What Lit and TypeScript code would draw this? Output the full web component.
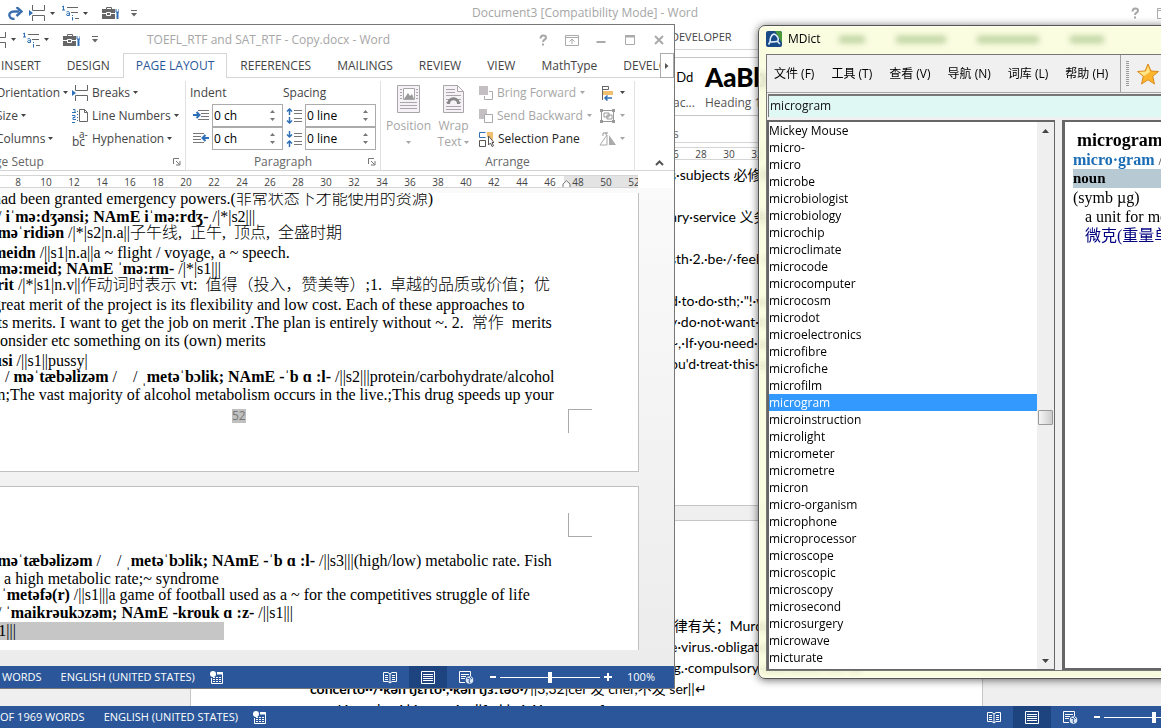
import { LitElement, html, css, svg } from "lit";
import { customElement, property } from "lit/decorators.js";
import { classMap } from "lit/directives/class-map.js";

const base = css`
  *, *::before, *::after { box-sizing: border-box; }
  :host {
    font-family: "Open Sans", "Noto Sans CJK SC", sans-serif;
    font-size: 12px;
    line-height: 16px;
    color: #444;
  }
  button {
    font: inherit;
    color: inherit;
    background: none;
    border: 0;
    padding: 0;
    margin: 0;
    display: flex;
    align-items: center;
    white-space: nowrap;
  }
  input { font: inherit; margin: 0; border-radius: 0; outline: 0; }
  svg { display: block; flex: none; }
  ul { list-style: none; margin: 0; padding: 0; }
  p { margin: 0; white-space: pre; }
`;

const icon = (w: number, h: number, body: unknown) =>
  html`<svg width=${w} height=${h} viewBox="0 0 ${w} ${h}" fill="none" aria-hidden="true">${body}</svg>`;

const caret = () => icon(5, 3, svg`<path d="M0 0h5L2.5 3z" fill="currentColor"/>`);

const breaksIcon = () => icon(17, 16, svg`
  <path d="M3.500 0v5.500H15.500V0M3.500 16V10.500H15.500V16" stroke="#666"/>
  <path d="M0 5v6l4-3z" fill="#2f6fb5"/>`);

const listIcon = () => icon(17, 16, svg`
  <path d="M0 2l1.500-1V5M0 5h3" stroke="#2f6fb5"/>
  <path d="M5 2.500h11M9 7.500h7M13 13.500h4" stroke="#666"/>
  <path d="M4.500 7c2-1 3 0 3 1v2.500h-2.500c-1.500-2 1-2.200 2.500-1.500M10.500 12v3.500M10.500 10v1" stroke="#2f6fb5"/>`);

const toolboxIcon = () => icon(17, 14, svg`
  <path d="M4.500 3V1.500h5V3" stroke="#666"/>
  <path d="M0 3h13v10H0z" fill="#666"/>
  <path d="M0 7.500h4M9 7.500h4M4.500 6.500h4v3h-4z" stroke="#fff"/>
  <path d="M15.500 6v7" stroke="#2f6fb5" stroke-width="2"/><path d="M14 3v3h3V3" stroke="#2f6fb5"/>`);

const redoIcon = () => icon(15, 13, svg`
  <path d="M11 4.500H6C2 4.500 1 7 1.500 9c.5 2 2.500 3 5 3" stroke="#3b6fb0" stroke-width="2.400"/>
  <path d="M8.500 0l5 4.500-5 4.500" stroke="#3b6fb0" stroke-width="2.400"/>`);

const moreIcon = () => icon(6, 7, svg`<path d="M0 .5h6" stroke="#666"/><path d="M0 3h6L3 6.500z" fill="#666"/>`);

const quickAccess = () => html`
  <div class="qat">
    <button aria-label="Redo">${redoIcon()}</button>
    <button class="split" aria-label="Breaks">${breaksIcon()}${caret()}</button>
    <button class="split" aria-label="Multilevel list">${listIcon()}${caret()}</button>
    <button class="tools" aria-label="Toolbox">${toolboxIcon()}</button>
    <button aria-label="Customize">${moreIcon()}</button>
  </div>`;

const helpIcon = () => icon(14, 14, svg`<path d="M4.500 5.500c0-4 5.500-4 5.500-.8 0 2-3 2-3 4.300M7 10.500V12.500" stroke="#a6a6a6" stroke-width="2"/>`);
const ribbonOptIcon = () => icon(14, 14, svg`<path d="M.5 2.500h13v10H.500zM.500 4.500h13M7 11V6M4.500 8.500L7 6l2.500 2.500" stroke="#aaa"/>`);
const minIcon = () => icon(14, 14, svg`<path d="M2.500 9h9" stroke="#aaa" stroke-width="2"/>`);
const maxIcon = () => icon(14, 14, svg`<path d="M2.500 2.500h9v9h-9z" stroke="#aaa"/><path d="M2 3.500h10" stroke="#aaa" stroke-width="2"/>`);
const closeIcon = () => icon(14, 14, svg`<path d="M3 3l8 8M11 3l-8 8" stroke="#aaa" stroke-width="2"/>`);

const wordCss = css`
  :host { display: flex; flex-direction: column; background: #fff; overflow: hidden; }
  .title { display: flex; align-items: center; flex: none; }
  .qat { display: flex; align-items: center; height: 24px; padding-left: 8px; }
  .qat .split { gap: 4px; margin-left: 6px; width: 28px; }
  .qat .split + .split { margin-left: 5px; }
  .qat .tools { margin: 0 12px 0 12px; }
  .name { color: #a6a6a6; font-size: 12px; white-space: nowrap; }
  .controls { display: flex; gap: 15px; margin-left: auto; }
  .ruler { display: flex; flex: none; height: 13px; border: solid #d5d5d5; border-width: 1px 0; font-size: 10px; line-height: 12px; overflow: hidden; }
  .ruler span { flex: none; width: 28px; text-align: center; }
  word-status { flex: none; }
`;

@customElement("word-status")
export class WordStatus extends LitElement {
  @property() words = "";
  static styles = [base, css`
    :host { display: flex; align-items: center; height: 22px; background: #2b579a; color: #fff; font-size: 11px; }
    .left { display: flex; align-items: center; gap: 19px; white-space: nowrap; }
    .left button { margin-left: -4px; }
    .right { display: flex; align-items: center; height: 22px; margin-left: auto; padding-right: 19px; }
    .view { justify-content: center; width: 38px; height: 22px; }
    .view.on { background: #1e4480; }
    .zoom { display: flex; align-items: center; margin: 0 15px 0 5px; gap: 4px; }
    input { appearance: none; width: 100px; height: 16px; background: linear-gradient(#fff, #fff) center / 100% 1px no-repeat; }
    input::-webkit-slider-thumb { appearance: none; width: 4px; height: 11px; background: #fff; border-radius: 0; }
  `];
  render() {
    return html`
      <div class="left">
        <span>${this.words}</span><span>ENGLISH (UNITED STATES)</span>
        <button aria-label="Macro recording">${icon(13, 13, svg`
          <circle cx="3" cy="3" r="3" fill="#fff"/>
          <path d="M7 1.500h5.500v11h-11V7" stroke="#fff"/><path d="M7 2.500h6" stroke="#fff" stroke-width="2"/>
          <path d="M3 6.500h8M3 8.500h8M3 10.500h8" stroke="#fff" stroke-dasharray="2 1"/>`)}</button>
      </div>
      <div class="right">
        <button class="view" aria-label="Read mode">${icon(14, 13, svg`
          <path d="M.500 1.500h4.500L7 3l2-1.500h4.500v9H9L7 12l-2-1.500H.500zM7 3v9" stroke="#fff"/>
          <path d="M2 4.500h3M2 6.500h3M2 8.500h3M9 4.500h3M9 6.500h3M9 8.500h3" stroke="#fff"/>`)}</button>
        <button class="view on" aria-label="Print layout">${icon(14, 13, svg`
          <path d="M.500.500h13v12H.500z" stroke="#fff"/><path d="M2 3.500h10M2 5.500h10M2 7.500h10M2 9.500h10" stroke="#fff"/>`)}</button>
        <button class="view" aria-label="Web layout">${icon(15, 13, svg`
          <path d="M6 11.500H.500v-11h11V5" stroke="#fff"/><path d="M2 3.500h8M2 5.500h5M2 7.500h4" stroke="#fff"/>
          <circle cx="10.500" cy="9" r="3.800" fill="#dbe6f5"/><path d="M8 7l3 1-1 2 1 2M11 6l2 2" stroke="#2b579a"/>`)}</button>
        <div class="zoom">
          <button aria-label="Zoom out">${icon(6, 10, svg`<path d="M0 5h6" stroke="#fff" stroke-width="2"/>`)}</button>
          <input type="range" aria-label="Zoom" min="0" max="200" value="100" />
          <button aria-label="Zoom in">${icon(8, 10, svg`<path d="M0 5h8M4 1v8" stroke="#fff" stroke-width="2"/>`)}</button>
        </div>
        <span>100%</span>
      </div>`;
  }
}

@customElement("word-back")
export class WordBack extends LitElement {
  static styles = [base, wordCss, css`
    .title { height: 26px; padding-right: 107px; gap: 335px; }
    .tabs { flex: none; height: 24px; padding: 3px 0 0 671px; border-bottom: 1px solid #d5d5d5; font-size: 11px; }
    .ribbon { display: flex; flex-direction: column; flex: none; height: 93px; padding: 7px 0 0 670px; border-bottom: 1px solid #d5d5d5; }
    .gallery { display: flex; gap: 10px; height: 59px; border: solid #c6c6c6; border-width: 1px 0; padding-left: 3px; color: #222; }
    .style { display: flex; flex-direction: column; min-width: 18px; white-space: nowrap; }
    .style b, .style i { font-family: Lato, sans-serif; font-style: normal; height: 37px; line-height: 38px; font-size: 13px; color: #000; }
    .style b { font-size: 26px; font-weight: 900; }
    .style span { color: #555; }
    .group { padding: 10px 0 0 3px; color: #666; }
    .ruler { margin-top: 4px; padding-left: 659px; }
    .desk { display: flex; flex-direction: column; flex: 1; min-height: 0; gap: 14px; overflow: hidden; background: #efefef; }
    .page { flex: none; width: 793px; margin-left: 190px; background: #fff; border: 1px solid #c6c6c6; padding-left: 119px; font: 14px/21px Lato, "Noto Sans CJK SC", sans-serif; color: #000; }
    .first { border-top: 0; height: 346px; padding-top: 4px; }
    .second { height: 346px; padding-top: 94px; }
    .tail { padding-left: 360px; }
    .next { padding-left: 28px; }
  `];
  render() {
    return html`
      <div class="title">
        ${quickAccess()}
        <span class="name">Document3 [Compatibility Mode] - Word</span>
        <div class="controls"><button aria-label="Help">${helpIcon()}</button><button aria-label="Ribbon options">${ribbonOptIcon()}</button></div>
      </div>
      <div class="tabs"><button>DEVELOPER</button></div>
      <div class="ribbon">
        <div class="gallery">
          <div class="style"><i>&nbsp;Dd</i><span>ac...</span></div>
          <div class="style"><b>AaBb</b><span>Heading 1</span></div>
        </div>
        <div class="group">s</div>
      </div>
      <div class="ruler">${[26, 28, 30, 32].map((n) => html`<span>${n}</span>`)}</div>
      <div class="desk">
        <div class="page first">
          <div class="tail">
            <p>s·subjects 必修科目</p><p> </p>
            <p>ary·service 义务兵役</p><p> </p>
            <p>sth·2.·be·/·feel obliged</p><p> </p>
            <p>d·to·do·sth;·"!·was</p>
            <p>y·do·not·want·to</p>
            <p>~,·If·you·need·any</p>
            <p>ou'd·treat·this·as</p>
          </div>
        </div>
        <div class="page second">
          <div class="tail">
            <p>·律有关；Murder</p>
            <p>e·virus.·obligatory</p>
            <p> g.·compulsory·education·for·all</p>
          </div>
          <p><b>concerto··/·kən'tʃɛrto·,·kən'tʃɜːtəʊ·/</b>||3,32|cer 发 cher,不发 ser||↵</p>
          <p class="next"><b>'·kənsɪˈ···ʌl·|·k···ə·n·k···ˈ|ʃɪ·s|·|ə·k·l·k·····t···ə·tʃɪ</b></p>
        </div>
      </div>
      <word-status words="OF 1969 WORDS"></word-status>`;
  }
}

type Line = { kind?: "tight" | "loose"; parts: [string, string?][] };

const pageOne: Line[] = [
  { parts: [["had been granted emergency powers.("], ["非常状态下才能使用的资源", "k"], [")"]] },
  { kind: "tight", parts: [[" / "], ["iˈmə:dʒənsi; NAmE iˈmə:rdʒ-", "b"], [" /|*|s2|||"]] },
  { kind: "loose", parts: [["/"], ["məˈridiən", "b"], [" /|*|s2|n.a||"], ["子午线", "k"], [",  "], ["正午", "k"], [",  "], ["顶点", "k"], [",  "], ["全盛时期", "k"]] },
  { kind: "tight", parts: [["meidn", "b"], [" /||s1|n.a||a ~ flight / voyage, a ~ speech."]] },
  { kind: "tight", parts: [["/"], ["mə:meid; NAmE ˈmə:rm-", "b"], [" /|*|s1|||"]] },
  { kind: "loose", parts: [[" "], ["rit", "b"], [" /|*|s1|n.v||"], ["作动词时表示", "k"], [" vt:  "], ["值得（投入，赞美等）", "k"], [";1.  "], ["卓越的品质或价值；优", "k"]] },
  { parts: [["great merit of the project is its flexibility and low cost. Each of these approaches to"]] },
  { parts: [["its merits. I want to get the job on merit .The plan is entirely without ~. 2.  "], ["常作", "k"], ["  merits"]] },
  { kind: "loose", parts: [["consider etc something on its (own) merits"]] },
  { kind: "tight", parts: [["usi", "b"], [" /||s1||pussy|"]] },
  { parts: [["   / "], ["məˈtæbəlizəm", "b"], [" /    / "], ["ˌmetəˈbɔlik; NAmE -ˈb ɑ :l-", "b"], [" /||s2|||protein/carbohydrate/alcohol"]] },
  { parts: [["m;The vast majority of alcohol metabolism occurs in the live.;This drug speeds up your"]] },
];

const pageTwo: Line[] = [
  { parts: [["/"], ["məˈtæbəlizəm", "b"], [" /    / "], ["ˌmetəˈbɔlik; NAmE -ˈb ɑ :l-", "b"], [" /||s3|||(high/low) metabolic rate. Fish"]] },
  { kind: "tight", parts: [["e a high metabolic rate;~ syndrome"]] },
  { parts: [["/ "], ["ˈmetəfə(r)", "b"], [" /||s1|||a game of football used as a ~ for the competitives struggle of life"]] },
  { parts: [[" / "], ["ˈmaikrəukɔzəm; NAmE -krouk ɑ :z-", "b"], [" /||s1|||"]] },
];

@customElement("word-front")
export class WordFront extends LitElement {
  static styles = [base, wordCss, css`
    .title { height: 28px; padding-top: 1px; padding-right: 8px; gap: 49px; }
    .tabs { display: flex; flex: none; height: 25px; padding-left: 27px; border-bottom: 1px solid #d5d5d5; }
    .tab { height: 25px; padding: 0 12px; border: 1px solid transparent; border-bottom: 0; }
    .tab.on { border-color: #d5d5d5; background: #fff; color: #2b579a; }
    .tabwrap { display: flex; flex: 1; min-width: 0; height: 25px; overflow: hidden; }
    .scroll { justify-content: center; flex: none; width: 14px; height: 25px; border: 1px solid #ababab; }
    .ribbon { display: flex; flex: none; height: 93px; padding: 3px 0 0 27px; border-bottom: 1px solid #d5d5d5; }
    .group { display: flex; flex-direction: column; justify-content: space-between; flex: none; border-right: 1px solid #e1e1e1; }
    .body { display: flex; height: 70px; }
    .label { display: flex; justify-content: center; position: relative; height: 16px; color: #666; }
    .label .launch { position: absolute; right: 4px; top: 4px; }
    .col { display: flex; flex-direction: column; }
    .col button, .col .cap { display: flex; align-items: center; height: 23px; gap: 3px; }
    .setup { width: 198px; }
    .setup .col { flex: none; padding-left: 8px; width: 76px; }
    .setup .col + .col { padding-left: 0; margin-left: 8px; width: auto; }
    .setup .label { padding-right: 148px; white-space: nowrap; }
    .para { width: 195px; }
    .para .col { width: 93px; padding-left: 4px; }
    .field { display: flex; align-items: center; height: 23px; gap: 3px; padding-left: 3px; }
    .spin { display: flex; width: 71px; height: 23px; border: 1px solid #ababab; background: #fff; }
    .spin input { flex: 1; min-width: 0; border: 0; padding: 0 1px; color: #000; background: none; }
    .steps { display: flex; flex-direction: column; justify-content: space-evenly; width: 12px; color: #777; }
    .arrange { width: 254px; }
    .big { flex-direction: column; width: 45px; height: 70px; padding-top: 4px; gap: 5px; line-height: 16px; }
    .big .two { display: flex; flex-direction: column; align-items: center; }
    .big .two span { display: flex; align-items: center; gap: 3px; height: 16px; }
    .off { color: #a6a6a6; }
    .arrange .big:first-child { margin-left: 5px; }
    .arrange .list { width: 120px; margin-left: 3px; }
    .arrange .list button { gap: 4px; }
    .arrange .last button { gap: 4px; }
    .black { color: #262626; }
    .collapse { align-self: flex-end; margin: 0 auto 4px; padding-left: 10px; }
    .ruler { margin: 4px 36px 0 0; padding-left: 43px; }
    .ruler .out { background: #e3e3e3; }
    .ruler .edge { position: relative; }
    .marker { position: absolute; left: -2px; top: 4px; }
    .desk { display: flex; flex-direction: column; flex: 1; min-height: 0; overflow: hidden; background: linear-gradient(#fafafa, #ececec); padding: 5px 35px 0 0; }
    .clip { overflow: hidden; display: flex; flex-direction: column; gap: 14px; height: 457px; flex: none; }
    .page { flex: none; background: #fff; border: solid #c0c0c0; border-width: 1px 1px 1px 0; padding-left: 32px; font: 16px/18px "Liberation Serif", "Noto Sans CJK SC", serif; color: #000; }
    .page.one { height: 282px; margin-top: -3px; border-top: 0; }
    .page.two { height: 170px; }
    .line { height: 18px; line-height: 18px; }
    .line.tight { height: 16px; }
    .line.loose { height: 20px; }
    .k { font: 300 16px/0 "Noto Sans CJK SC", sans-serif; }
    .footer, .header { display: flex; align-items: flex-start; justify-content: space-between; padding: 5px 46px 0 239px; }
    .footer span { font: 12px/14px "Open Sans", sans-serif; background: #c0c0c0; color: #777; }
    .mark { width: 24px; height: 24px; border: solid #aaa; border-width: 1px 0 0 1px; }
    .header { justify-content: flex-end; padding-top: 26px; margin-bottom: 15px; }
    .header .mark { border-width: 0 0 1px 1px; }
    .sel { display: block; width: 232px; height: 18px; margin-left: -1px; background: #c6c6c6; }
    word-status { padding-left: 41px; }
  `];

  private line(l: Line) {
    return html`<p class=${classMap({ line: true, tight: l.kind === "tight", loose: l.kind === "loose" })}>${l.parts.map(
      ([t, k]) => (k === "b" ? html`<b>${t}</b>` : k === "k" ? html`<span class="k">${t}</span>` : t)
    )}</p>`;
  }

  private spin(id: string, label: string, value: string, glyph: unknown) {
    return html`<div class="field">${glyph}
      <div class="spin"><input id=${id} aria-label=${label} .value=${value} />
        <div class="steps" aria-hidden="true">
          ${icon(5, 3, svg`<path d="M0 3h5L2.500 0z" fill="currentColor"/>`)}${caret()}
        </div>
      </div></div>`;
  }

  render() {
    const launch = html`<button class="launch" aria-label="More">${icon(8, 8, svg`<path d="M.500 6V.500H6M3 3l3.500 3.500M7 3v4H3" stroke="#777"/>`)}</button>`;
    const blue = "#2f6fb5";
    const indentL = icon(16, 14, svg`<path d="M5 1.500h11M8 4.500h8M8 7.500h8M5 10.500h11" stroke="#777"/><path d="M0 6h6M3.500 3l3 3-3 3" stroke=${blue} stroke-width="2"/>`);
    const indentR = icon(16, 14, svg`<path d="M0 1.500h11M0 4.500h8M0 7.500h8M0 10.500h11" stroke="#777"/><path d="M10 6h6M12.500 3l-3 3 3 3" stroke=${blue} stroke-width="2"/>`);
    const spaceA = icon(16, 16, svg`<path d="M8 2.500h8M8 5.500h8M8 10.500h8M8 13.500h8" stroke="#777"/><path d="M3.500 7V1M1 3.500L3.500 1 6 3.500M3.500 9v6M1 12.500L3.500 15 6 12.500" stroke=${blue} stroke-width="1.500"/>`);
    const spaceB = icon(16, 16, svg`<path d="M8 2.500h8M8 5.500h8M8 10.500h8M8 13.500h8" stroke="#777"/><path d="M3.500 0v6M1 3.500L3.500 6 6 3.500M3.500 16v-6M1 12.500L3.500 10 6 12.500" stroke=${blue} stroke-width="1.500"/>`);
    return html`
      <div class="title">
        ${quickAccess()}
        <span class="name">TOEFL_RTF and SAT_RTF - Copy.docx - Word</span>
        <div class="controls">
          <button aria-label="Help">${helpIcon()}</button><button aria-label="Ribbon options">${ribbonOptIcon()}</button>
          <button aria-label="Minimize">${minIcon()}</button><button aria-label="Maximize">${maxIcon()}</button>
          <button aria-label="Close">${closeIcon()}</button>
        </div>
      </div>
      <nav class="tabs">
        <div class="tabwrap">
        ${["INSERT", "DESIGN", "PAGE LAYOUT", "REFERENCES", "MAILINGS", "REVIEW", "VIEW", "MathType", "DEVELOPER"].map(
          (t) => html`<button class=${classMap({ tab: true, on: t === "PAGE LAYOUT" })}>${t}</button>`)}
        </div>
        <button class="scroll" aria-label="Scroll tabs">${icon(4, 6, svg`<path d="M0 0v6l3.500-3z" fill="#555"/>`)}</button>
      </nav>
      <div class="ribbon">
        <section class="group setup">
          <div class="body">
            <div class="col">
              <button>Orientation ${caret()}</button><button>Size ${caret()}</button><button>Columns ${caret()}</button>
            </div>
            <div class="col">
              <button>${breaksIcon()}Breaks ${caret()}</button>
              <button>${icon(17, 16, svg`<path d="M7.500 1.500h5l3 3v9h-8zM12.500 1.500v3h3" stroke="#666"/><path d="M1 1.500h2v3M0 4.500h4M0 7.500h3v2H1v2h3M0 14.500h3" stroke=${blue}/><path d="M5.500 3v11" stroke=${blue} stroke-dasharray="1 2"/>`)}Line Numbers ${caret()}</button>
              <button>${icon(17, 16, svg`<text x="0" y="15" font-size="12" fill="#444">bc</text><text x="7" y="7" font-size="10" fill="#444">a-</text>`)}Hyphenation ${caret()}</button>
            </div>
          </div>
          <div class="label">Page Setup ${launch}</div>
        </section>
        <section class="group para">
          <div class="body">
            <div class="col"><span class="cap">Indent</span>
              ${this.spin("il", "Indent left", "0 ch", indentL)}${this.spin("ir", "Indent right", "0 ch", indentR)}</div>
            <div class="col"><span class="cap">Spacing</span>
              ${this.spin("sb", "Spacing before", "0 line", spaceA)}${this.spin("sa", "Spacing after", "0 line", spaceB)}</div>
          </div>
          <div class="label">Paragraph ${launch}</div>
        </section>
        <section class="group arrange">
          <div class="body">
            <button class="big off">${icon(23, 28, svg`<path d="M.500.500h22v27H.500z" fill="#f5f2f5" stroke="#aaa5aa"/><path d="M6.500 3.500h11v11h-11z" fill="#fff" stroke="#aaa5aa"/><path d="M7 14l4-6 2 3 2-2 2 5z" fill="#999"/><path d="M3 4.500h2M3 7.500h2M3 10.500h2M3 13.500h2M19 4.500h2M19 7.500h2M19 10.500h2M19 13.500h2M3 17.500h17M3 20.500h17M3 23.500h17" stroke="#aaa5aa"/>`)}
              <span class="two"><span>Position</span><span>${caret()}</span></span></button>
            <button class="big off">${icon(21, 28, svg`<path d="M.500.500h14l6 6v21H.500zM14.500.500v6h6" fill="#f5f2f5" stroke="#aaa5aa"/><path d="M3 4.500h9M3 7.500h9M3 10.500h15M3 14.500h3M15 14.500h3M3 17.500h2M16 17.500h2M3 21.500h15M3 24.500h15" stroke="#aaa5aa"/><path d="M5.500 19c0-7 10-7 10 0" stroke="#888" stroke-width="3"/>`)}
              <span class="two"><span>Wrap</span><span>Text ${caret()}</span></span></button>
            <div class="col list">
              <button class="off">${icon(14, 14, svg`<path d="M0 0h9v9H0z" fill="#c3bfc3"/><path d="M10 5.500h3.500v8h-8V10" stroke="#aaa"/>`)}Bring Forward ${caret()}</button>
              <button class="off">${icon(14, 14, svg`<path d="M0 0h8v5H5v5H0z" fill="#c3bfc3"/><path d="M5.500 5.500h8v8h-8z" stroke="#aaa"/>`)}Send Backward ${caret()}</button>
              <button class="black">${icon(15, 16, svg`<path d="M6.500 1.500h-6v5h6" stroke="#2f6fb5"/><path d="M.500 9.500h6v6h-6z" stroke="#555"/><path d="M8 1h6v9l-4-4H8z" fill="#f0c070"/><path d="M9.500 5v9l2-2 1.500 3.500 1.500-.7-1.500-3.300h2z" fill="#fff" stroke="#555"/>`)}Selection Pane</button>
            </div>
            <div class="col last">
              <button aria-label="Align">${icon(17, 16, svg`<path d="M3.500 1v14" stroke="#666"/><path d="M3.500 1.500h6v3h-6z" stroke="#666"/><path d="M4 6h10v4H4z" fill="#f0c070"/><path d="M13 13h-7M8.500 10.500L6 13l2.500 2.500" stroke=${blue} stroke-width="1.500"/>`)}${caret()}</button>
              <button class="off" aria-label="Group">${icon(17, 16, svg`<path d="M2.500 2.500h12v11h-12zM5 5h5v4H5zM8 7h5v4H8z" stroke="#999"/><path d="M1 1h3v3H1zM13 1h3v3h-3zM1 12h3v3H1zM13 12h3v3h-3z" fill="#999"/>`)}${caret()}</button>
              <button class="off" aria-label="Rotate">${icon(17, 14, svg`<path d="M8 3v10H1z" stroke="#aaa"/><path d="M10 3v10h7z" fill="#aaa"/><path d="M4 4V1h5M7 0v3" stroke="#999"/>`)}${caret()}</button>
            </div>
          </div>
          <div class="label">Arrange</div>
        </section>
        <button class="collapse" aria-label="Collapse ribbon">${icon(9, 6, svg`<path d="M1 5l3.500-3.500L8 5" stroke="#555" stroke-width="2"/>`)}</button>
      </div>
      <div class="ruler">
        ${Array.from({ length: 20 }, (_, i) => 8 + i * 2).map((n) => html`<span>${n}</span>`)}
        <span class="out edge">48<i class="marker">${icon(9, 8, svg`<path d="M4.500.800L8 4v3.500H1V4z" fill="#fff" stroke="#777"/>`)}</i></span>
        <span class="out">50</span><span class="out">52</span>
      </div>
      <div class="desk">
        <div class="clip">
          <article class="page one">
            ${pageOne.map((l) => this.line(l))}
            <div class="footer"><span>52</span><div class="mark"></div></div>
          </article>
          <article class="page two">
            <div class="header"><div class="mark"></div></div>
            ${pageTwo.map((l) => this.line(l))}
            <p class="line sel">s1|||</p>
          </article>
        </div>
      </div>
      <word-status words="WORDS"></word-status>`;
  }
}

const entries = ["Mickey Mouse", "micro-", "micro", "microbe", "microbiologist", "microbiology", "microchip", "microclimate", "microcode", "microcomputer", "microcosm", "microdot", "microelectronics", "microfibre", "microfiche", "microfilm", "microgram", "microinstruction", "microlight", "micrometer", "micrometre", "micron", "micro-organism", "microphone", "microprocessor", "microscope", "microscopic", "microscopy", "microsecond", "microsurgery", "microwave", "micturate"];

@customElement("mdict-window")
export class MdictWindow extends LitElement {
  static styles = [base, css`
    :host {
      display: flex; flex-direction: column; padding: 0 7px 7px; color: #000;
      border: 1px solid #555; border-radius: 7px; overflow: hidden;
      background: rgba(250, 252, 218, 0.82);
      backdrop-filter: blur(3px);
      box-shadow: inset 0 0 0 1px #fffff0, 0 1px 8px rgba(0, 0, 0, 0.6);
    }
    .bar { display: flex; align-items: center; flex: none; gap: 6px; height: 28px; padding-bottom: 2px; }
    .haze { display: flex; gap: 31px; margin-left: 12px; }
    .haze i { height: 7px; background: #a9c58c; filter: blur(3px); opacity: 0.8; }
    .haze .w1 { width: 26px; } .haze .w2 { width: 50px; } .haze .w3 { width: 62px; } .haze .w4 { width: 34px; }
    .client { display: flex; flex-direction: column; flex: 1; min-height: 0; background: #f0f0f0; border: 1px solid #777; border-right: 0; }
    .menu { display: flex; align-items: center; flex: none; height: 38px; border-bottom: 1px solid #a8a8a8; }
    nav { display: flex; gap: 17px; padding: 0 12px 0 7px; height: 37px; border-right: 1px solid #a0a0a0; }
    .grip { width: 3px; height: 26px; margin: 0 8px 0 5px; background: repeating-linear-gradient(#999 0 1px, transparent 1px 2px); }
    .query { flex: none; height: 23px; margin: 1px 0 3px 1px; padding: 0 4px 2px 1px; border: solid #777; border-width: 2px 0 0 1px; background: #e0f8f3; color: #111; }
    .panes { display: flex; flex: 1; min-height: 0; gap: 7px; }
    .list { display: flex; flex: none; width: 288px; border: solid #666; border-width: 2px 1px 1px 2px; background: #fff; overflow: hidden; }
    ul { flex: 1; }
    li { height: 17px; line-height: 17px; white-space: nowrap; }
    li.on { background: #3399ff; color: #fff; }
    .track { display: flex; flex-direction: column; align-items: center; width: 17px; background: #efefef; }
    .track button { justify-content: center; width: 17px; height: 17px; }
    .thumb { width: 15px; height: 15px; margin: 271px 0 auto; border: 1px solid #999; border-radius: 1px; background: linear-gradient(90deg, #f5f5f5, #ccc); }
    .entry { flex: 1; border: solid #666; border-width: 2px 0 2px 3px; background: #fff; padding: 9px 0 0 8px; font: 16px/19px "Liberation Serif", "Noto Sans CJK SC", serif; overflow: hidden; }
    .entry h1 { font-size: 18px; line-height: 19px; margin: 0 0 0 4px; }
    .hw { color: #1a6cb5; }
    .slash { color: #555; }
    .pos { background: #b7c9d3; font-size: 15px; }
    .def { padding-left: 12px; }
    .zh { color: #000080; }
  `];
  render() {
    return html`
      <div class="bar">
        ${icon(16, 16, svg`<rect width="16" height="16" rx="2" fill="#174a87"/><path d="M9 0h5l2 2v10z" fill="#4a9a3c"/><path d="M4 11c0-3 1-7 4-8 3 1 5 4 4 7-2 1-5 1-8 1zM2.500 13.500L4 11M11 10l3 3" stroke="#dfeeff" stroke-width="1.500"/>`)}
        <span>MDict</span>
        <div class="haze" aria-hidden="true"><i class="w1"></i><i class="w2"></i><i class="w3"></i><i class="w4"></i></div>
      </div>
      <div class="client">
        <div class="menu">
          <nav>${["文件 (F)", "工具 (T)", "查看 (V)", "导航 (N)", "词库 (L)", "帮助 (H)"].map((m) => html`<button>${m}</button>`)}</nav>
          <div class="grip"></div>
          <button aria-label="Favorite">${icon(22, 22, svg`<path d="M11 1l3 7 7.500.500-5.800 4.800L17.500 21 11 16.800 4.500 21l1.800-7.700L.500 8.500 8 8z" fill="#fcb52d" stroke="#d98a1c"/><path d="M11 3l2 6-6 4-5-4 7-.5z" fill="#ffe58a"/>`)}</button>
        </div>
        <input class="query" aria-label="Search word" .value=${"microgram"} />
        <div class="panes">
          <div class="list">
            <ul role="listbox" aria-label="Entries">${entries.map((e) => html`
              <li role="option" aria-selected=${e === "microgram"} class=${classMap({ on: e === "microgram" })}>${e}</li>`)}</ul>
            <div class="track">
              <button aria-label="Scroll up">${icon(7, 4, svg`<path d="M0 4h7L3.500 0z" fill="#444"/>`)}</button>
              <div class="thumb"></div>
              <button aria-label="Scroll down">${icon(7, 4, svg`<path d="M0 0h7L3.500 4z" fill="#444"/>`)}</button>
            </div>
          </div>
          <article class="entry">
            <h1>microgram</h1>
            <p><b class="hw">micro·gram</b> <span class="slash">/ ˈmaɪkrəʊɡræm /</span></p>
            <p class="pos"><b>noun</b></p>
            <p>(symb µg)</p>
            <p class="def">a unit for measuring weight</p>
            <p class="def zh">微克(重量单位)</p>
          </article>
        </div>
      </div>`;
  }
}

@customElement("app-root")
export class AppRoot extends LitElement {
  static styles = css`
    :host { display: block; position: relative; height: 100vh; overflow: hidden; background: #fff; }
    word-back { position: absolute; inset: 0 -117px 0 0; }
    word-front { position: absolute; left: -40px; top: 24px; bottom: 39px; width: 715px; border: 1px solid #777; box-sizing: border-box; }
    mdict-window { position: absolute; left: 758px; right: -40px; top: 25px; bottom: 49px; box-sizing: border-box; }
  `;
  render() {
    return html`<word-back></word-back><word-front></word-front><mdict-window></mdict-window>`;
  }
}
